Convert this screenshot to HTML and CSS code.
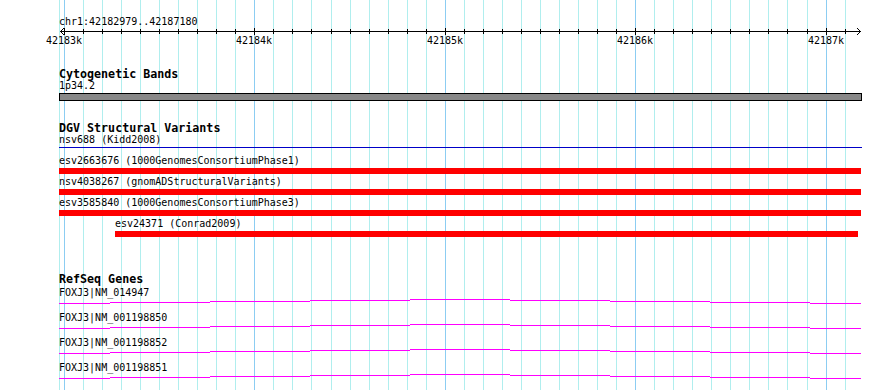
FILE: index.html
```html
<!DOCTYPE html>
<html lang="en">
<head>
<meta charset="utf-8">
<title>Genome browser</title>
<link rel="stylesheet" href="styles.css">
</head>
<body>
<div class="browser">
  <svg class="grid" width="890" height="390" viewBox="0 0 890 390" shape-rendering="crispEdges">
    <g class="minor">
      <line x1="59.5" x2="59.5" y1="0" y2="390"/>
      <line x1="83.5" x2="83.5" y1="0" y2="390"/>
      <line x1="102.5" x2="102.5" y1="0" y2="390"/>
      <line x1="121.5" x2="121.5" y1="0" y2="390"/>
      <line x1="140.5" x2="140.5" y1="0" y2="390"/>
      <line x1="159.5" x2="159.5" y1="0" y2="390"/>
      <line x1="178.5" x2="178.5" y1="0" y2="390"/>
      <line x1="197.5" x2="197.5" y1="0" y2="390"/>
      <line x1="216.5" x2="216.5" y1="0" y2="390"/>
      <line x1="235.5" x2="235.5" y1="0" y2="390"/>
      <line x1="273.5" x2="273.5" y1="0" y2="390"/>
      <line x1="292.5" x2="292.5" y1="0" y2="390"/>
      <line x1="311.5" x2="311.5" y1="0" y2="390"/>
      <line x1="331.5" x2="331.5" y1="0" y2="390"/>
      <line x1="350.5" x2="350.5" y1="0" y2="390"/>
      <line x1="369.5" x2="369.5" y1="0" y2="390"/>
      <line x1="388.5" x2="388.5" y1="0" y2="390"/>
      <line x1="407.5" x2="407.5" y1="0" y2="390"/>
      <line x1="426.5" x2="426.5" y1="0" y2="390"/>
      <line x1="464.5" x2="464.5" y1="0" y2="390"/>
      <line x1="483.5" x2="483.5" y1="0" y2="390"/>
      <line x1="502.5" x2="502.5" y1="0" y2="390"/>
      <line x1="521.5" x2="521.5" y1="0" y2="390"/>
      <line x1="540.5" x2="540.5" y1="0" y2="390"/>
      <line x1="559.5" x2="559.5" y1="0" y2="390"/>
      <line x1="578.5" x2="578.5" y1="0" y2="390"/>
      <line x1="597.5" x2="597.5" y1="0" y2="390"/>
      <line x1="616.5" x2="616.5" y1="0" y2="390"/>
      <line x1="654.5" x2="654.5" y1="0" y2="390"/>
      <line x1="673.5" x2="673.5" y1="0" y2="390"/>
      <line x1="692.5" x2="692.5" y1="0" y2="390"/>
      <line x1="711.5" x2="711.5" y1="0" y2="390"/>
      <line x1="730.5" x2="730.5" y1="0" y2="390"/>
      <line x1="749.5" x2="749.5" y1="0" y2="390"/>
      <line x1="768.5" x2="768.5" y1="0" y2="390"/>
      <line x1="787.5" x2="787.5" y1="0" y2="390"/>
      <line x1="807.5" x2="807.5" y1="0" y2="390"/>
      <line x1="845.5" x2="845.5" y1="0" y2="390"/>
    </g>
    <g class="major">
      <line x1="64.5" x2="64.5" y1="0" y2="390"/>
      <line x1="254.5" x2="254.5" y1="0" y2="390"/>
      <line x1="445.5" x2="445.5" y1="0" y2="390"/>
      <line x1="635.5" x2="635.5" y1="0" y2="390"/>
      <line x1="826.5" x2="826.5" y1="0" y2="390"/>
    </g>
  </svg>

  <div class="tracks">
    <div class="locus">chr1:42182979..42187180</div>
    <svg class="ruler" width="890" height="22" viewBox="0 0 890 22">
      <g class="axis" shape-rendering="crispEdges">
        <line x1="60" x2="861" y1="4.5" y2="4.5"/>
        <line x1="83.5" x2="83.5" y1="2" y2="7"/>
        <line x1="102.5" x2="102.5" y1="2" y2="7"/>
        <line x1="121.5" x2="121.5" y1="2" y2="7"/>
        <line x1="140.5" x2="140.5" y1="2" y2="7"/>
        <line x1="159.5" x2="159.5" y1="2" y2="7"/>
        <line x1="178.5" x2="178.5" y1="2" y2="7"/>
        <line x1="197.5" x2="197.5" y1="2" y2="7"/>
        <line x1="216.5" x2="216.5" y1="2" y2="7"/>
        <line x1="235.5" x2="235.5" y1="2" y2="7"/>
        <line x1="273.5" x2="273.5" y1="2" y2="7"/>
        <line x1="292.5" x2="292.5" y1="2" y2="7"/>
        <line x1="311.5" x2="311.5" y1="2" y2="7"/>
        <line x1="331.5" x2="331.5" y1="2" y2="7"/>
        <line x1="350.5" x2="350.5" y1="2" y2="7"/>
        <line x1="369.5" x2="369.5" y1="2" y2="7"/>
        <line x1="388.5" x2="388.5" y1="2" y2="7"/>
        <line x1="407.5" x2="407.5" y1="2" y2="7"/>
        <line x1="426.5" x2="426.5" y1="2" y2="7"/>
        <line x1="464.5" x2="464.5" y1="2" y2="7"/>
        <line x1="483.5" x2="483.5" y1="2" y2="7"/>
        <line x1="502.5" x2="502.5" y1="2" y2="7"/>
        <line x1="521.5" x2="521.5" y1="2" y2="7"/>
        <line x1="540.5" x2="540.5" y1="2" y2="7"/>
        <line x1="559.5" x2="559.5" y1="2" y2="7"/>
        <line x1="578.5" x2="578.5" y1="2" y2="7"/>
        <line x1="597.5" x2="597.5" y1="2" y2="7"/>
        <line x1="616.5" x2="616.5" y1="2" y2="7"/>
        <line x1="654.5" x2="654.5" y1="2" y2="7"/>
        <line x1="673.5" x2="673.5" y1="2" y2="7"/>
        <line x1="692.5" x2="692.5" y1="2" y2="7"/>
        <line x1="711.5" x2="711.5" y1="2" y2="7"/>
        <line x1="730.5" x2="730.5" y1="2" y2="7"/>
        <line x1="749.5" x2="749.5" y1="2" y2="7"/>
        <line x1="768.5" x2="768.5" y1="2" y2="7"/>
        <line x1="787.5" x2="787.5" y1="2" y2="7"/>
        <line x1="807.5" x2="807.5" y1="2" y2="7"/>
        <line x1="845.5" x2="845.5" y1="2" y2="7"/>
        <line x1="64.5" x2="64.5" y1="1" y2="8"/>
        <line x1="254.5" x2="254.5" y1="1" y2="8"/>
        <line x1="445.5" x2="445.5" y1="1" y2="8"/>
        <line x1="635.5" x2="635.5" y1="1" y2="8"/>
        <line x1="826.5" x2="826.5" y1="1" y2="8"/>
        <polyline class="arrow" points="64,1 60.5,4.5 64,8"/>
        <polyline class="arrow" points="857,1 860.5,4.5 857,8"/>
      </g>
      <g class="ruler-labels">
        <text x="64" y="17">42183k</text>
        <text x="254" y="17">42184k</text>
        <text x="445" y="17">42185k</text>
        <text x="635" y="17">42186k</text>
        <text x="826" y="17">42187k</text>
      </g>
    </svg>

    <section class="track cyto">
      <h2 class="track-title">Cytogenetic Bands</h2>
      <div class="feature-label">1p34.2</div>
      <div class="band"></div>
    </section>

    <section class="track dgv">
      <h2 class="track-title">DGV Structural Variants</h2>
      <div class="feature">
        <div class="feature-label">nsv688 (Kidd2008)</div>
        <div class="bar-slot"><div class="thin-line"></div></div>
      </div>
      <div class="feature">
        <div class="feature-label">esv2663676 (1000GenomesConsortiumPhase1)</div>
        <div class="bar-slot"><div class="bar"></div></div>
      </div>
      <div class="feature">
        <div class="feature-label">nsv4038267 (gnomADStructuralVariants)</div>
        <div class="bar-slot"><div class="bar"></div></div>
      </div>
      <div class="feature">
        <div class="feature-label">esv3585840 (1000GenomesConsortiumPhase3)</div>
        <div class="bar-slot"><div class="bar"></div></div>
      </div>
      <div class="feature feature-offset">
        <div class="feature-label">esv24371 (Conrad2009)</div>
        <div class="bar-slot"><div class="bar bar-short"></div></div>
      </div>
    </section>

    <section class="track genes">
      <h2 class="track-title">RefSeq Genes</h2>
      <div class="gene">
        <div class="feature-label">FOXJ3|NM_014947</div>
        <svg class="gene-line" width="803" height="14" viewBox="0 0 803 14" shape-rendering="crispEdges"><path d="M0 5.5H51M51 4.5H151M151 3.5H251M251 2.5H351M351 1.5H451M451 2.5H551M551 3.5H651M651 4.5H751M751 5.5H802"/></svg>
      </div>
      <div class="gene">
        <div class="feature-label">FOXJ3|NM_001198850</div>
        <svg class="gene-line" width="803" height="14" viewBox="0 0 803 14" shape-rendering="crispEdges"><path d="M0 5.5H51M51 4.5H151M151 3.5H251M251 2.5H351M351 1.5H451M451 2.5H551M551 3.5H651M651 4.5H751M751 5.5H802"/></svg>
      </div>
      <div class="gene">
        <div class="feature-label">FOXJ3|NM_001198852</div>
        <svg class="gene-line" width="803" height="14" viewBox="0 0 803 14" shape-rendering="crispEdges"><path d="M0 5.5H51M51 4.5H151M151 3.5H251M251 2.5H351M351 1.5H451M451 2.5H551M551 3.5H651M651 4.5H751M751 5.5H802"/></svg>
      </div>
      <div class="gene">
        <div class="feature-label">FOXJ3|NM_001198851</div>
        <svg class="gene-line" width="803" height="14" viewBox="0 0 803 14" shape-rendering="crispEdges"><path d="M0 5.5H51M51 4.5H151M151 3.5H251M251 2.5H351M351 1.5H451M451 2.5H551M551 3.5H651M651 4.5H751M751 5.5H802"/></svg>
      </div>
    </section>
  </div>
</div>
</body>
</html>
```

FILE: styles.css
```css
body {
  margin: 0;
  background: #ffffff;
}

.browser {
  position: relative;
  width: 890px;
  height: 390px;
  overflow: hidden;
  font-family: "DejaVu Sans Mono", "Liberation Mono", monospace;
  color: #000;
}

.grid {
  position: absolute;
  left: 0;
  top: 0;
  z-index: 0;
}

.grid .minor line {
  stroke: #b0eeee;
  stroke-width: 1;
}

.grid .major line {
  stroke: #8ccdf2;
  stroke-width: 1;
}

.tracks {
  position: relative;
  z-index: 1;
  padding-top: 16px;
}

.locus {
  margin-left: 59px;
  font-size: 10px;
  line-height: 11px;
  height: 11px;
  white-space: nowrap;
}

.ruler {
  display: block;
}

.ruler .axis line,
.ruler .arrow {
  stroke: #000;
  stroke-width: 1;
  fill: none;
}

.ruler-labels text {
  font-family: "DejaVu Sans Mono", "Liberation Mono", monospace;
  font-size: 10px;
  text-anchor: middle;
  fill: #000;
}

.track {
  margin-left: 59px;
}

.track-title {
  margin: 0;
  font-size: 11.67px;
  font-weight: bold;
  line-height: 12px;
  height: 12px;
  white-space: nowrap;
}

.feature-label {
  font-size: 10px;
  line-height: 11px;
  height: 11px;
  white-space: nowrap;
}

.cyto {
  margin-top: 19px;
}

.band {
  margin-top: 2px;
  width: 801px;
  height: 6px;
  background: #888888;
  border: 1px solid #000;
}

.dgv {
  margin-top: 21px;
}

.feature {
  height: 21px;
}

.bar-slot {
  margin-top: 2px;
  height: 6px;
}

.bar {
  width: 802px;
  height: 6px;
  background: #ff0000;
}

.thin-line {
  margin-top: 2px;
  width: 803px;
  height: 1px;
  background: #0000c8;
}

.feature-offset {
  margin-left: 56px;
}

.bar-short {
  width: 743px;
}

.genes {
  margin-top: 34px;
}

.genes .track-title {
  margin-bottom: 2px;
}

.gene {
  height: 25px;
}

.gene-line {
  display: block;
}

.gene-line path {
  fill: none;
  stroke: #ff00ff;
  stroke-width: 1;
}
```
